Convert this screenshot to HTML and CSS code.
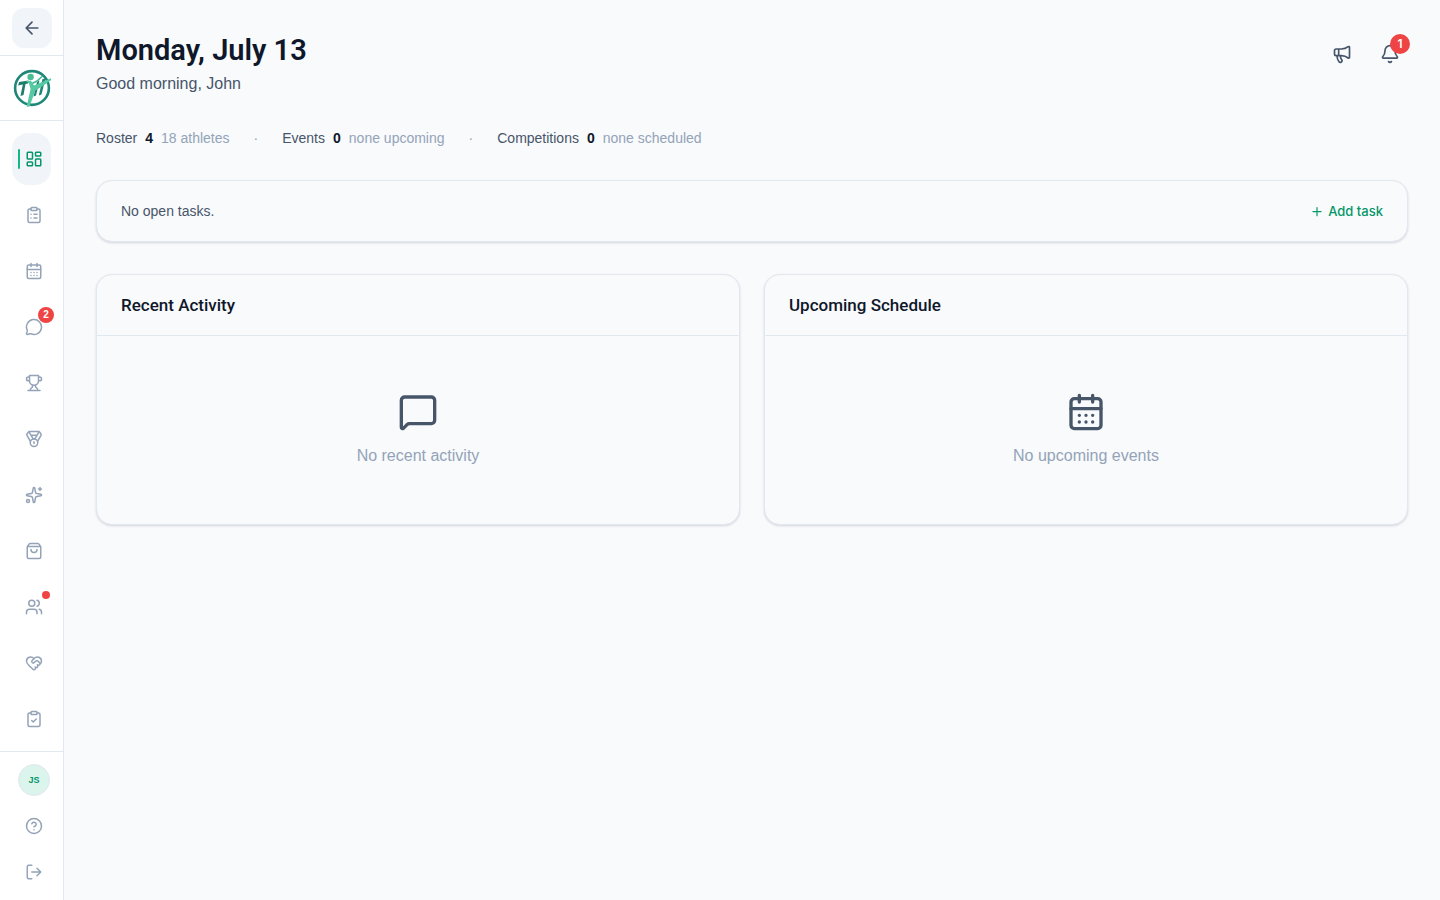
FILE: index.html
```html
<!DOCTYPE html>
<html lang="en">
<head>
<meta charset="utf-8">
<meta name="viewport" content="width=device-width, initial-scale=1">
<title>Dashboard</title>
<link rel="stylesheet" href="styles.css">
</head>
<body>
<div class="app">
  <aside class="sidebar">
    <div class="sidebar-top">
      <button class="collapse" type="button" aria-label="Collapse sidebar">
        <svg class="icon icon-md" viewBox="0 0 24 24"><path d="m12 19-7-7 7-7M19 12H5"/></svg>
      </button>
    </div>
    <div class="brand">
      <svg class="logo" viewBox="0 0 40 40" role="img" aria-label="Team logo">
        <circle cx="20" cy="20" r="16.900" fill="none" stroke="#1f8778" stroke-width="2.600"/>
        <path d="M7 14 16.500 12.500 16 15.500 13.500 16 11.500 27 8.500 28 10.800 16.500 6.200 17.500Z" fill="#1d7d6d"/>
        <path d="M25 14 27.500 12.500 24 27.500 21.500 28.500ZM30.500 11 33.500 10.500 29.500 26.500 26.800 27.500Z" fill="#1f8574"/>
        <path d="M20 15.500 25 13 30 8.500" fill="none" stroke="#45b894" stroke-width="1.600" stroke-linecap="round"/>
        <path d="M13.800 13 19 12.800 22 17.500 38.800 10.300 39.200 12 30 18.500 23.200 22.500 21 29 17.500 38.500 14.600 38.800 16.800 29 18.600 21 17 15.500Z" fill="#55c9a1"/>
        <circle cx="18.600" cy="9" r="3.200" fill="#4abd96"/>
      </svg>
    </div>
    <nav class="nav" aria-label="Main">
      <a class="nav-item active" href="#" aria-label="Dashboard" aria-current="page">
        <svg class="icon" viewBox="0 0 24 24"><rect x="3" y="3" width="7" height="9" rx="1"/><rect x="14" y="3" width="7" height="5" rx="1"/><rect x="14" y="12" width="7" height="9" rx="1"/><rect x="3" y="16" width="7" height="5" rx="1"/></svg>
      </a>
      <a class="nav-item" href="#" aria-label="Roster">
        <svg class="icon" viewBox="0 0 24 24"><rect x="8" y="2" width="8" height="4" rx="1"/><path d="M16 4h2a2 2 0 0 1 2 2v14a2 2 0 0 1-2 2H6a2 2 0 0 1-2-2V6a2 2 0 0 1 2-2h2M12 11h4M12 16h4M8 11h.01M8 16h.01"/></svg>
      </a>
      <a class="nav-item" href="#" aria-label="Calendar">
        <svg class="icon" viewBox="0 0 24 24"><path d="M8 2v4M16 2v4M3 10h18M8 14h.01M12 14h.01M16 14h.01M8 18h.01M12 18h.01M16 18h.01"/><rect x="3" y="4" width="18" height="18" rx="2"/></svg>
      </a>
      <a class="nav-item" href="#" aria-label="Messages, 2 unread">
        <span class="icon-wrap">
          <svg class="icon" viewBox="0 0 24 24"><path d="M2.992 16.342a2 2 0 0 1 .094 1.167l-1.065 3.290a1 1 0 0 0 1.236 1.168l3.413-.998a2 2 0 0 1 1.099.092 10 10 0 1 0-4.777-4.719"/></svg>
          <span class="count">2</span>
        </span>
      </a>
      <a class="nav-item" href="#" aria-label="Competitions">
        <svg class="icon" viewBox="0 0 24 24"><path d="M6 9H4.500a2.500 2.500 0 0 1 0-5H6M18 9h1.500a2.500 2.500 0 0 0 0-5H18M4 22h16M10 14.660V17c0 .55-.47.98-.97 1.210C7.850 18.750 7 20.240 7 22M14 14.660V17c0 .55.47.98.97 1.210C16.150 18.750 17 20.240 17 22M18 2H6v7a6 6 0 0 0 12 0V2Z"/></svg>
      </a>
      <a class="nav-item" href="#" aria-label="Scores">
        <svg class="icon" viewBox="0 0 24 24"><path d="M7.210 15 2.660 7.140a2 2 0 0 1 .13-2.200L4.400 2.800A2 2 0 0 1 6 2h12a2 2 0 0 1 1.600.8l1.600 2.140a2 2 0 0 1 .14 2.200L16.790 15M11 12 5.120 2.200M13 12l5.880-9.800M8 7h8M12 18v-2h-.5"/><circle cx="12" cy="17" r="5"/></svg>
      </a>
      <a class="nav-item" href="#" aria-label="Skills">
        <svg class="icon" viewBox="0 0 24 24"><path d="M11.017 2.814a1 1 0 0 1 1.966 0l1.051 5.558a2 2 0 0 0 1.594 1.594l5.558 1.051a1 1 0 0 1 0 1.966l-5.558 1.051a2 2 0 0 0-1.594 1.594l-1.051 5.558a1 1 0 0 1-1.966 0l-1.051-5.558a2 2 0 0 0-1.594-1.594l-5.558-1.051a1 1 0 0 1 0-1.966l5.558-1.051a2 2 0 0 0 1.594-1.594zM20 2v4M22 4h-4"/><circle cx="4" cy="20" r="2"/></svg>
      </a>
      <a class="nav-item" href="#" aria-label="Shop">
        <svg class="icon" viewBox="0 0 24 24"><path d="M16 10a4 4 0 0 1-8 0M3.103 6.034h17.794M3.400 5.467a2 2 0 0 0-.4 1.200V20a2 2 0 0 0 2 2h14a2 2 0 0 0 2-2V6.667a2 2 0 0 0-.4-1.200l-2-2.667A2 2 0 0 0 17 2H7a2 2 0 0 0-1.600.8z"/></svg>
      </a>
      <a class="nav-item" href="#" aria-label="Staff, new updates">
        <span class="icon-wrap">
          <svg class="icon" viewBox="0 0 24 24"><path d="M16 21v-2a4 4 0 0 0-4-4H6a4 4 0 0 0-4 4v2M22 21v-2a4 4 0 0 0-3-3.870M16 3.130a4 4 0 0 1 0 7.750"/><circle cx="9" cy="7" r="4"/></svg>
          <span class="dot"></span>
        </span>
      </a>
      <a class="nav-item" href="#" aria-label="Volunteers">
        <svg class="icon" viewBox="0 0 24 24"><path d="M19.414 14.414C21 12.828 22 11.500 22 9.500a5.500 5.500 0 0 0-9.591-3.676.6.6 0 0 1-.818.001A5.500 5.500 0 0 0 2 9.500c0 2.300 1.500 4 3 5.500l5.535 5.362a2 2 0 0 0 2.879.052 2.120 2.120 0 0 0-.004-3 2.124 2.124 0 1 0 3-3 2.124 2.124 0 0 0 3.004 0 2 2 0 0 0 0-2.828l-1.881-1.882a2.410 2.410 0 0 0-3.409 0l-1.710 1.710a2 2 0 0 1-2.828 0 2 2 0 0 1 0-2.828l2.823-2.762"/></svg>
      </a>
      <a class="nav-item" href="#" aria-label="Tasks">
        <svg class="icon" viewBox="0 0 24 24"><rect x="8" y="2" width="8" height="4" rx="1"/><path d="M16 4h2a2 2 0 0 1 2 2v14a2 2 0 0 1-2 2H6a2 2 0 0 1-2-2V6a2 2 0 0 1 2-2h2M9 14l2 2 4-4"/></svg>
      </a>
    </nav>
    <div class="sidebar-foot">
      <button class="avatar" type="button" aria-label="Account">JS</button>
      <a class="foot-link" href="#" aria-label="Help">
        <svg class="icon" viewBox="0 0 24 24"><circle cx="12" cy="12" r="10"/><path d="M9.090 9a3 3 0 0 1 5.830 1c0 2-3 3-3 3M12 17h.01"/></svg>
      </a>
      <button class="foot-link" type="button" aria-label="Log out">
        <svg class="icon" viewBox="0 0 24 24"><path d="m16 17 5-5-5-5M21 12H9M9 21H5a2 2 0 0 1-2-2V5a2 2 0 0 1 2-2h4"/></svg>
      </button>
    </div>
  </aside>

  <main class="main">
    <header class="page-head">
      <div>
        <h1 class="title">Monday, July 13</h1>
        <p class="greeting">Good morning, John</p>
      </div>
      <div class="actions">
        <button class="icon-btn" type="button" aria-label="Announcements">
          <svg class="icon icon-md" viewBox="0 0 24 24"><path d="M11 6a13 13 0 0 0 8.400-2.800A1 1 0 0 1 21 4v12a1 1 0 0 1-1.600.8A13 13 0 0 0 11 14H5a2 2 0 0 1-2-2V8a2 2 0 0 1 2-2zM6 14a12 12 0 0 0 2.400 7.200 2 2 0 0 0 3.200-2.400A8 8 0 0 1 10 14M8 6v8"/></svg>
        </button>
        <button class="icon-btn" type="button" aria-label="Notifications">
          <svg class="icon icon-md" viewBox="0 0 24 24"><path d="M10.268 21a2 2 0 0 0 3.464 0M3.262 15.326A1 1 0 0 0 4 17h16a1 1 0 0 0 .74-1.673C19.410 13.956 18 12.499 18 8A6 6 0 0 0 6 8c0 4.499-1.411 5.956-2.738 7.326"/></svg>
          <span class="notice">1</span>
        </button>
      </div>
    </header>

    <div class="stats">
      <div class="stat"><span>Roster</span><strong>4</strong><span class="muted">18 athletes</span></div>
      <span class="muted">·</span>
      <div class="stat"><span>Events</span><strong>0</strong><span class="muted">none upcoming</span></div>
      <span class="muted">·</span>
      <div class="stat"><span>Competitions</span><strong>0</strong><span class="muted">none scheduled</span></div>
    </div>

    <section class="card tasks">
      <p>No open tasks.</p>
      <button class="add-task" type="button">
        <svg class="icon icon-sm" viewBox="0 0 24 24"><path d="M5 13h14M12 6v14"/></svg>
        Add task
      </button>
    </section>

    <div class="columns">
      <section class="card">
        <h2 class="card-title">Recent Activity</h2>
        <div class="empty">
          <svg class="icon icon-lg" viewBox="0 0 24 24"><path d="M22 17a2 2 0 0 1-2 2H6.828a2 2 0 0 0-1.414.586l-2.202 2.202A.71.71 0 0 1 2 21.286V5a2 2 0 0 1 2-2h16a2 2 0 0 1 2 2z"/></svg>
          <p>No recent activity</p>
        </div>
      </section>
      <section class="card">
        <h2 class="card-title">Upcoming Schedule</h2>
        <div class="empty">
          <svg class="icon icon-lg" viewBox="0 0 24 24"><path d="M8 2v4M16 2v4M3 10h18M8 14h.01M12 14h.01M16 14h.01M8 18h.01M12 18h.01M16 18h.01"/><rect x="3" y="4" width="18" height="18" rx="2"/></svg>
          <p>No upcoming events</p>
        </div>
      </section>
    </div>
  </main>
</div>
</body>
</html>
```
FILE: styles.css
```css
*, *::before, *::after { box-sizing: border-box; }

:root {
  --ink: #0f172a;
  --text: #475569;
  --muted: #94a3b8;
  --line: #e2e8f0;
  --page: #f8fafc;
  --green: #059669;
  --red: #ef4444;
}

body {
  margin: 0;
  background: var(--page);
  color: var(--text);
  font-family: "Liberation Sans", Arial, sans-serif;
  font-size: 14px;
  line-height: 20px;
}

h1, h2, p { margin: 0; }
a { color: inherit; text-decoration: none; }
button {
  padding: 0;
  border: 0;
  background: none;
  color: inherit;
  font: inherit;
  cursor: pointer;
}

.icon {
  display: block;
  flex: none;
  width: 18px;
  height: 18px;
  fill: none;
  stroke: currentColor;
  stroke-width: 2;
  stroke-linecap: round;
  stroke-linejoin: round;
}
.icon-sm { width: 14px; height: 14px; }
.icon-md { width: 20px; height: 20px; }
.icon-lg { width: 40px; height: 40px; color: var(--text); }

.app { display: flex; min-height: 100vh; }

.sidebar {
  display: flex;
  flex: none;
  flex-direction: column;
  width: 64px;
  height: 100vh;
  position: sticky;
  top: 0;
  background: #fff;
  border-right: 1px solid var(--line);
  color: var(--muted);
}
.sidebar-top {
  padding: 8px 11px 7px 12px;
  border-bottom: 1px solid var(--line);
}
.collapse {
  display: grid;
  place-items: center;
  width: 40px;
  height: 40px;
  border-radius: 12px;
  background: #f1f5f9;
  color: var(--text);
}
.brand {
  display: flex;
  justify-content: center;
  padding: 12px 0;
  border-bottom: 1px solid var(--line);
}
.logo { display: block; width: 40px; height: 40px; }

.nav {
  display: flex;
  flex: 1;
  flex-direction: column;
  gap: 4px;
  min-height: 0;
  padding: 12px;
  overflow: hidden;
}
.nav-item {
  display: flex;
  flex: none;
  align-items: center;
  height: 52px;
  padding-left: 13px;
  border-radius: 16px;
}
.nav-item.active {
  padding-left: 6px;
  gap: 5px;
  background: #f1f5f9;
  color: var(--green);
}
.nav-item.active::before {
  content: "";
  width: 2px;
  height: 20px;
  border-radius: 2px;
  background: #10b981;
}
.icon-wrap { position: relative; }
.count {
  position: absolute;
  top: -11px;
  right: -11px;
  width: 16px;
  height: 16px;
  border-radius: 8px;
  background: var(--red);
  color: #fff;
  font-size: 10px;
  font-weight: 700;
  line-height: 16px;
  text-align: center;
}
.dot {
  position: absolute;
  top: -7px;
  right: -7px;
  width: 8px;
  height: 8px;
  border-radius: 4px;
  background: var(--red);
}

.sidebar-foot {
  display: flex;
  flex-direction: column;
  align-items: center;
  gap: 14px;
  padding: 12px 0 12px 5px;
  border-top: 1px solid var(--line);
}
.avatar {
  width: 32px;
  height: 32px;
  border: 1px solid var(--line);
  border-radius: 16px;
  background: #dbf4ec;
  color: var(--green);
  font-size: 9px;
  font-weight: 700;
}
.foot-link {
  display: grid;
  place-items: center;
  width: 32px;
  height: 32px;
}

.main { flex: 1; min-width: 0; padding: 32px; }

.page-head {
  display: flex;
  justify-content: space-between;
  align-items: flex-start;
}
.title {
  color: var(--ink);
  font-family: Roboto, "Liberation Sans", sans-serif;
  font-size: 29px;
  font-weight: 600;
  line-height: 36px;
}
.greeting {
  margin-top: 4px;
  font-size: 16px;
  line-height: 24px;
}
.actions { display: flex; gap: 12px; padding-top: 4px; }
.icon-btn {
  position: relative;
  display: grid;
  place-items: center;
  width: 36px;
  height: 36px;
}
.notice {
  position: absolute;
  top: -2px;
  right: -2px;
  width: 20px;
  height: 20px;
  border-radius: 10px;
  background: var(--red);
  color: #fff;
  font-family: Inter, sans-serif;
  font-size: 12px;
  font-weight: 600;
  line-height: 20px;
  text-align: center;
}

.stats { display: flex; flex-wrap: wrap; gap: 24px; margin-top: 32px; }
.stat { display: flex; gap: 8px; }
.stat strong { color: var(--ink); }
.muted { color: var(--muted); }

.card {
  border: 1px solid var(--line);
  border-radius: 16px;
  background: var(--page);
  box-shadow: 0 1px 3px rgba(15, 23, 42, 0.1), 0 1px 2px rgba(15, 23, 42, 0.06);
}
.tasks {
  display: flex;
  justify-content: space-between;
  margin-top: 32px;
  padding: 20px 24px;
}
.add-task {
  display: flex;
  align-items: center;
  gap: 4px;
  color: var(--green);
  font-family: Inter, sans-serif;
  font-size: 13px;
  font-weight: 500;
}
.columns {
  display: grid;
  grid-template-columns: repeat(2, minmax(0, 1fr));
  gap: 24px;
  margin-top: 32px;
}
.card-title {
  padding: 16px 24px;
  border-bottom: 1px solid var(--line);
  color: var(--ink);
  font-family: Roboto, "Liberation Sans", sans-serif;
  font-size: 17px;
  font-weight: 500;
  line-height: 28px;
}
.empty {
  display: flex;
  flex-direction: column;
  align-items: center;
  gap: 12px;
  padding: 56px 24px;
  color: var(--muted);
  font-size: 16px;
  line-height: 24px;
}
```
